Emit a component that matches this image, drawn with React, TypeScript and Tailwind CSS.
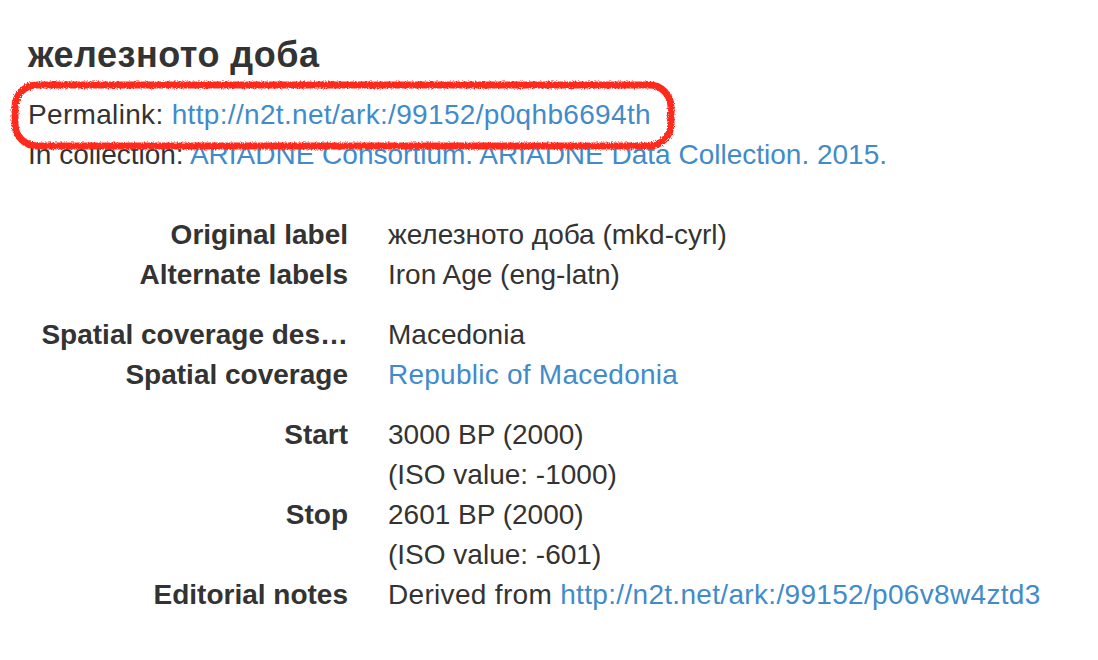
import React from "react";

const font = { fontFamily: '"Liberation Sans", Arial, sans-serif' };

function Row({ label, children, gapTop = false }: { label: string; children: React.ReactNode; gapTop?: boolean }) {
  return (
    <div className={`flex ${gapTop ? "mt-[20px]" : ""}`}>
      <dt className="w-[320px] shrink-0 whitespace-nowrap text-right font-bold">{label}</dt>
      <dd className="ml-[40px]">{children}</dd>
    </div>
  );
}

export default function App() {
  return (
    <div className="min-h-[660px] w-[1098px] bg-white text-[#333] text-[28px] leading-[40px]" style={font}>
      <div className="pl-[28px] pt-[35px]">
        <h4 className="text-[36px] leading-[40px] font-bold tracking-[0.5px] m-0 text-[#333]">железното доба</h4>
        <div className="mt-[20px]">
          <div className="relative tracking-[0.33px]">
            Permalink: <a className="text-[#428bca]">http://n2t.net/ark:/99152/p0qhb6694th</a>
            <svg className="absolute left-[-18px] top-[-15px] pointer-events-none" width="668" height="72" viewBox="0 0 668 72">
              <defs>
                <filter id="rough" x="-5%" y="-20%" width="110%" height="140%">
                  <feTurbulence type="fractalNoise" baseFrequency="0.7" numOctaves="2" result="n" />
                  <feDisplacementMap in="SourceGraphic" in2="n" scale="4" />
                </filter>
              </defs>
              <rect x="5" y="5" width="656" height="61" rx="22" ry="22" fill="none" stroke="#ff2a1f" strokeWidth="7" filter="url(#rough)" />
            </svg>
          </div>
          <div>
            In collection: <a className="text-[#428bca]">ARIADNE Consortium. ARIADNE Data Collection. 2015.</a>
          </div>
        </div>
        <dl className="mt-[40px]">
          <Row label="Original label">железното доба (mkd-cyrl)</Row>
          <Row label="Alternate labels">Iron Age (eng-latn)</Row>
          <Row label="Spatial coverage des…" gapTop>Macedonia</Row>
          <Row label="Spatial coverage">
            <a className="text-[#428bca] tracking-[0.25px]">Republic of Macedonia</a>
          </Row>
          <Row label="Start" gapTop>
            <div>3000 BP (2000)</div>
            <div>(ISO value: -1000)</div>
          </Row>
          <Row label="Stop">
            <div>2601 BP (2000)</div>
            <div>(ISO value: -601)</div>
          </Row>
          <Row label="Editorial notes">
            <span className="tracking-[0.32px]">
              Derived from <a className="text-[#428bca]">http://n2t.net/ark:/99152/p06v8w4ztd3</a>
            </span>
          </Row>
        </dl>
      </div>
    </div>
  );
}
